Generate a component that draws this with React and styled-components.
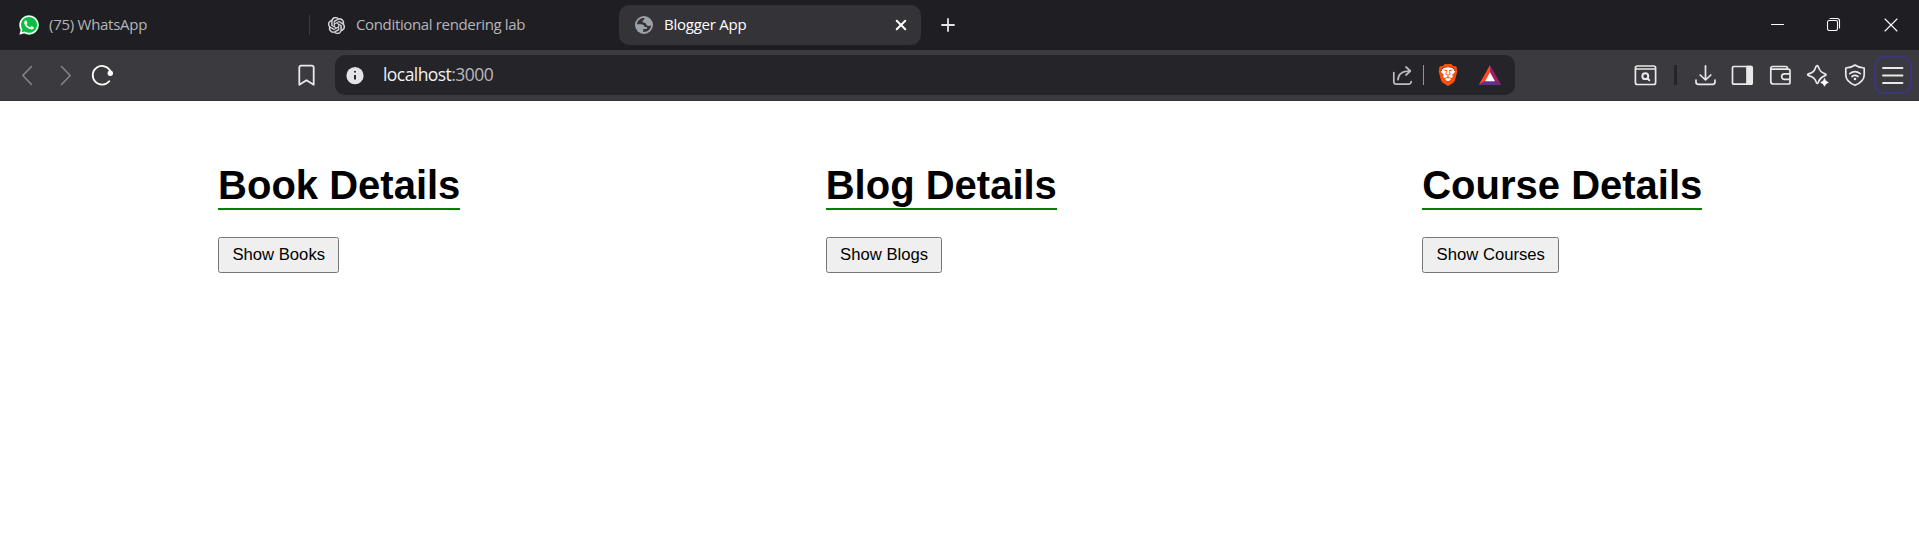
import React from 'react';
import styled, { createGlobalStyle } from 'styled-components';
import { FaWhatsapp } from 'react-icons/fa';
import { SiOpenai, SiBrave } from 'react-icons/si';

const GlobalStyle = createGlobalStyle`
  * { box-sizing: border-box; }
  body { margin: 0; background: #fff; font-family: "Liberation Sans", Arial, sans-serif; overflow: hidden; }
`;

const Browser = styled.div`
  display: flex;
  flex-direction: column;
  min-height: 557px;
`;

const TabStrip = styled.header`
  display: flex;
  align-items: center;
  height: 50px;
  background: #1f1e23;
`;

const Tab = styled.div`
  display: flex;
  align-items: center;
  flex: none;
  width: ${(p) => p.$width}px;
  height: 40px;
  padding-left: ${(p) => p.$pad}px;
  border-radius: 10px;
  background: ${(p) => (p.$active ? '#343338' : 'transparent')};
  color: ${(p) => (p.$active ? '#fff' : '#b6b5b9')};
`;

const TabTitle = styled.span`
  flex: 1;
  padding-bottom: 2px;
  font: 15px/20px "Open Sans", "Noto Sans", sans-serif;
  letter-spacing: ${(p) => p.$spacing}px;
  white-space: nowrap;
`;

const Favicon = styled.span`
  display: flex;
  align-items: center;
  justify-content: center;
  flex: none;
  width: 20px;
  height: 20px;
  margin-right: ${(p) => p.$gap}px;
  border-radius: 50%;
  background: ${(p) => p.$fill || 'transparent'};
  color: ${(p) => p.$color};
  svg { flex: none; }
`;

const Separator = styled.span`
  flex: none;
  width: ${(p) => p.$width || 1}px;
  height: 20px;
  margin-left: ${(p) => p.$left || 0}px;
  background: ${(p) => p.$color};
`;

const Glyph = styled.svg.attrs({ viewBox: '0 0 24 24', width: 24, height: 24 })`
  display: block;
  flex: none;
  margin-left: ${(p) => p.$left || 0}px;
  margin-right: ${(p) => p.$right || 0}px;
  fill: none;
  stroke: ${(p) => p.$color || '#e9e9eb'};
  stroke-width: ${(p) => p.$weight || 1.6};
  stroke-linecap: round;
  stroke-linejoin: round;
`;

const WindowControls = styled.div`
  display: flex;
  margin-left: auto;
  padding-right: 16px;
  gap: 33px;
`;

const Toolbar = styled.nav`
  display: flex;
  align-items: center;
  height: 51px;
  background: #3b3a3f;
  border-bottom: 1px solid #323136;
`;

const AddressBar = styled.div`
  display: flex;
  align-items: center;
  flex: none;
  width: 1180px;
  height: 40px;
  margin-left: 17px;
  padding: 0 13px 0 8px;
  border-radius: 10px;
  background: #252429;
`;

const Address = styled.span`
  flex: 1;
  margin-left: 16px;
  padding-bottom: 2px;
  font: 17.5px/24px "Open Sans", "Noto Sans", sans-serif;
  letter-spacing: -0.56px;
  color: #f0f0f2;
`;

const Port = styled.span`
  color: #b9b8bd;
`;

const BraveShield = styled.span`
  display: flex;
  align-items: center;
  justify-content: center;
  width: 24px;
  height: 24px;
  margin-left: 12px;
  color: #fb4f0c;
  background: radial-gradient(circle at 12px 11px, #fff 7px, transparent 7.5px);
`;

const MenuButton = styled.span`
  display: flex;
  align-items: center;
  justify-content: center;
  width: 38px;
  height: 38px;
  margin-left: 7px;
  border: 2px solid #3b367f;
  border-radius: 10px;
`;

const Page = styled.main`
  display: flex;
  justify-content: space-around;
  padding: 57px 34px 0 35.4px;
`;

const Section = styled.section`
  display: flex;
  flex-direction: column;
  align-items: flex-start;
`;

const Heading = styled.h1`
  margin: 0 0 27px;
  height: 52px;
  font-size: 40px;
  line-height: 55px;
  font-weight: 700;
  color: #000;
  border-bottom: 2px solid #008000;
  white-space: nowrap;
`;

const ShowButton = styled.button`
  height: 36px;
  padding: 0 13.4px 2px;
  border: 1px solid #767676;
  border-radius: 2.5px;
  background: #efefef;
  color: #000;
  font: 16.667px/19px "Liberation Sans", Arial, sans-serif;
`;

const sections = [
  ['Book Details', 'Show Books'],
  ['Blog Details', 'Show Blogs'],
  ['Course Details', 'Show Courses'],
];

export default function App() {
  return (
    <Browser>
      <GlobalStyle />
      <TabStrip>
        <Tab $width={309} $pad={19}>
          <Favicon $gap={10} $fill="#0cbd43" $color="#fff"><FaWhatsapp size={22} /></Favicon>
          <TabTitle $spacing={-0.27}>(75) WhatsApp</TabTitle>
        </Tab>
        <Separator $color="#3b3a3f" />
        <Tab $width={309} $pad={16}>
          <Favicon $gap={10} $color="#e2e2e4"><SiOpenai size={17} stroke="#e2e2e4" strokeWidth={0.5} /></Favicon>
          <TabTitle $spacing={-0.35}>Conditional rendering lab</TabTitle>
        </Tab>
        <Tab $width={302} $pad={15} $active>
          <Favicon $gap={10}>
            <Glyph $color="none">
              <circle cx="12" cy="12" r="9" fill="#9da2a9" />
              <path
                fill="#343338"
                d="M12.500 4.900C8.500 4.700 5.300 7.500 4.900 11.200H9c2 0 3.500 1 3.500 2.700H15v2h-3.800v3.100c4.400.3 7.600-2.700 7.900-6.700-1.300.9-2.900.9-4.100.1-.8-.6-.8-1.700-1.800-2.300-1.100-.6-2.700-.3-2.700-1.800 0-1.600 2-1.300 2-3.400z"
              />
            </Glyph>
          </Favicon>
          <TabTitle $spacing={-0.24}>Blogger App</TabTitle>
          <Glyph $color="#fff" $weight={2} $right={8}>
            <path d="M7.7 7.7 16.3 16.3M16.3 7.7 7.7 16.3" />
          </Glyph>
        </Tab>
        <Glyph $left={15} $color="#e4e4e6" $weight={1.8}><path d="M12 6v12M6 12h12" /></Glyph>
        <WindowControls>
          <Glyph $color="#fff" $weight={1}><path d="M6.500 11.500h12" /></Glyph>
          <Glyph $color="#fff" $weight={1.1}>
            <path d="M5.5 9.2q0-1.7 1.7-1.7h6.6q1.7 0 1.7 1.7v6.6q0 1.7-1.7 1.7H7.2q-1.7 0-1.7-1.7z" />
            <path d="M8 5.5h7q2.5 0 2.5 2.5v7" />
          </Glyph>
          <Glyph $color="#fff" $weight={1.1}><path d="m6 6 12 12M18 6l-12 12" /></Glyph>
        </WindowControls>
      </TabStrip>
      <Toolbar>
        <Glyph $left={15} $color="#85848a"><path d="M16.5 3.5 7.8 12.5l8.7 9" /></Glyph>
        <Glyph $left={15} $color="#85848a"><path d="m7.5 3.5 8.7 9-8.7 9" /></Glyph>
        <Glyph $left={12} $color="#fff" $weight={1.8}>
          <path d="M20.4 8.2A9.3 9.3 0 1 0 19.2 18.2" />
          <circle cx="20.3" cy="10.2" r="2.7" fill="#fff" stroke="none" />
        </Glyph>
        <Glyph $left={180} $weight={1.8}>
          <path d="M5.3 4.7q0-2 2-2h10.4q2 0 2 2v17.1l-7.2-4.6-7.2 4.6z" />
        </Glyph>
        <AddressBar>
          <Glyph>
            <circle cx="12" cy="12.7" r="8.6" fill="#e4e3e8" stroke="none" />
            <path d="M12 12v4.5" stroke="#29282d" strokeWidth="2" strokeLinecap="butt" />
            <path d="M12 8.7v.1" stroke="#29282d" strokeWidth="2" />
          </Glyph>
          <Address>localhost<Port>:3000</Port></Address>
          <Glyph $color="#bdbcc1" $weight={1.7}>
            <path d="M3.8 9.5v9q0 2.7 2.7 2.7h12q2.5 0 2.7-2.7M8 16.7c.2-5.5 4-8.7 12-8.7M16 4l4.4 4-4.4 4" />
          </Glyph>
          <Separator $left={9} $color="#929197" />
          <BraveShield><SiBrave size={22} /></BraveShield>
          <Glyph $left={18}>
            <path d="M12 2 .7 22.1 12 15z" fill="#ff4724" stroke="none" />
            <path d="M12 2v13l11.3 7.1z" fill="#9e1f63" stroke="none" />
            <path d="M.7 22.1h22.6L12 15z" fill="#662d91" stroke="none" />
            <path d="m12 9.3-5 9h10z" fill="#fff" stroke="none" />
          </Glyph>
        </AddressBar>
        <Glyph $left={118} $weight={1.7}>
          <path d="M2.4 5q0-2 2-2h16.200q2 0 2 2v14.500q0 2-2 2H4.400q-2 0-2-2zM2.500 6h20" />
          <circle cx="12.300" cy="13.2" r="2.9" strokeWidth="2" />
          <path d="m14.500 15.500 1.800 1.800" strokeWidth="2" />
        </Glyph>
        <Separator $left={17} $width={3} $color="#252429" />
        <Glyph $left={16} $weight={1.7}>
          <path d="M12.500 2.800v14M7.200 12l5.300 5 5.300-5M3 17v2q0 2.300 2.300 2.300h14.400q2.300 0 2.300-2.300v-2" />
        </Glyph>
        <Glyph $left={13} $weight={1.7}>
          <rect x="2.5" y="3.5" width="19.7" height="17.7" rx="1.2" />
          <path d="M17 3.5h4.500v17.700H17z" fill="#e9e9eb" />
        </Glyph>
        <Glyph $left={14} $weight={1.7}>
          <path d="M19.5 6V5.2q0-1.7-1.7-1.7H4.6Q2.8 3.5 2.8 5.3v13.2q0 2.5 2.5 2.5h14.9q1.8 0 1.8-1.8V8q0-1.8-1.8-1.8H4.5Q2.8 6.2 2.8 5M22 10.8h-5.5q-2.8 0-2.8 2.8t2.8 2.8H22" />
        </Glyph>
        <Glyph $left={14} $weight={1.7}>
          <path d="M10.7 2.8Q11.6 2.3 12.2 3.6C13.6 8 15 9.4 19 10.9q2 .9 0 1.7c-4 1.5-5.3 2.8-6.8 6.9q-.9 2-1.8 0C8.9 15.4 7.6 14.1 2.6 12.6q-1.9-.9 0-1.7C7.2 9.4 8.6 8 10 3.6q.3-.7.7-.8z" />
          <path d="M18.5 15.5q.8 3.1 3.9 3.9-3.1.8-3.9 3.9-.8-3.1-3.9-3.9 3.1-.8 3.9-3.9z" fill="#fff" stroke="#fff" strokeWidth=".5" />
        </Glyph>
        <Glyph $left={13} $weight={1.7}>
          <path d="M12 2q3.7 2.8 9.2 3v7q0 6.5-9.2 10.3Q2.8 18.5 2.8 12V5Q8.3 4.8 12 2z" />
          <path d="M6.8 10.7q5.2-4.2 10.4 0M9 13.5q3-2.3 6 0" />
          <circle cx="12" cy="16" r="1.3" fill="#e9e9eb" stroke="none" />
        </Glyph>
        <MenuButton>
          <Glyph $weight={1.8}><path d="M2 5h19.5M2 12.5h19.5M2 20h19.5" /></Glyph>
        </MenuButton>
      </Toolbar>
      <Page>
        {sections.map(([title, action]) => (
          <Section key={title}>
            <Heading>{title}</Heading>
            <ShowButton type="button">{action}</ShowButton>
          </Section>
        ))}
      </Page>
    </Browser>
  );
}
